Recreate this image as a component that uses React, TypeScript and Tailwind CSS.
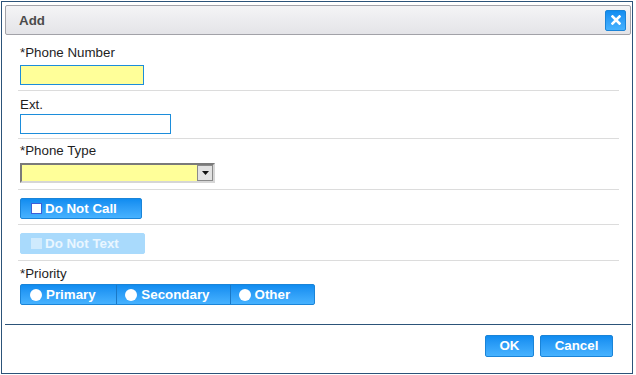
import React from "react";

const blueBtn =
  "bg-linear-to-b from-[#0f8cf0] to-[#46b2ff] border border-[#1a84d8] rounded-[2px] text-white font-bold text-[13.33px]";

function Checkbox({ disabled }: { disabled?: boolean }) {
  return (
    <span
      className={
        disabled
          ? "w-[11px] h-[11px] bg-[#cfeafd] border border-[#cfeafd]"
          : "w-[11px] h-[11px] bg-white border border-[#3d5fd8]"
      }
    />
  );
}

function Radio() {
  return <span className="w-[12px] h-[12px] rounded-full bg-white" />;
}

export default function App() {
  const segments = [
    { label: "Primary", w: "w-[96px]" },
    { label: "Secondary", w: "w-[114px]" },
    { label: "Other", w: "w-[85px]" },
  ];

  return (
    <div
      className="w-[636px] h-[375px] bg-white overflow-hidden text-[#1e1e1e]"
      style={{ fontFamily: '"Liberation Sans", Arial, sans-serif' }}
    >
      <div className="ml-[1px] mt-[1px] w-[632px] h-[373px] border border-[#2c5379] bg-white flex flex-col">
        {/* title bar */}
        <div className="mt-[3px] ml-[3px] w-[626px] h-[30px] shrink-0 border border-[#a2a2a8] rounded-[2px] bg-linear-to-b from-[#f4f4f6] to-[#e4e4e8] flex items-center justify-between pl-[13px] pr-[4px]">
          <span className="text-[13.33px] font-bold text-[#4b4b4b] leading-[15px]">Add</span>
          <button className={"w-[21px] h-[21px] flex items-center justify-center " + blueBtn}>
            <svg width="10" height="10" viewBox="0 0 10 10">
              <path d="M1.5 1.5 L8.5 8.5 M8.5 1.5 L1.5 8.5" stroke="white" strokeWidth="2.6" strokeLinecap="square" />
            </svg>
          </button>
        </div>

        {/* body */}
        <div className="ml-[16px] w-[601px] flex flex-col text-[13.33px]">
          <div className="border-b border-[#dcdcdc] pl-[2px] pt-[10px] pb-[5px] flex flex-col">
            <label className="h-[15px] leading-[15px]">*Phone Number</label>
            <input className="mt-[5px] w-[124px] h-[20px] bg-[#ffff99] border border-[#1c8ddb] outline-none" />
          </div>

          <div className="border-b border-[#dcdcdc] pl-[2px] pt-[6px] pb-[4px] flex flex-col">
            <label className="h-[15px] leading-[15px]">Ext.</label>
            <input className="mt-[2px] w-[151px] h-[20px] bg-white border border-[#1c8ddb] outline-none" />
          </div>

          <div className="border-b border-[#dcdcdc] pl-[2px] pt-[4px] pb-[6px] flex flex-col">
            <label className="h-[15px] leading-[15px]">*Phone Type</label>
            <div className="mt-[5px] w-[195px] h-[20px] border-2 border-t-[#7a7a7a] border-l-[#7a7a7a] border-b-[#d6d6d6] border-r-[#d6d6d6] bg-[#ffff99] flex justify-end">
              <div className="w-[16px] h-full bg-[#e2e2e2] border border-[#8a8a8a] flex items-center justify-center">
                <svg width="7" height="4" viewBox="0 0 7 4">
                  <path d="M0 0 H7 L3.5 4 Z" fill="#111" />
                </svg>
              </div>
            </div>
          </div>

          <div className="border-b border-[#dcdcdc] pl-[2px] pt-[8px] pb-[5px] flex">
            <button className={"w-[122px] h-[21px] flex items-center pl-[10px] gap-[3px] leading-none " + blueBtn}>
              <Checkbox />
              <span>Do Not Call</span>
            </button>
          </div>

          <div className="border-b border-[#dcdcdc] pl-[2px] pt-[8px] pb-[6px] flex">
            <button className="w-[125px] h-[21px] flex items-center pl-[10px] gap-[3px] leading-none bg-[#a9dafc] border border-[#a9dafc] rounded-[2px] text-[#e9f6ff] font-bold text-[13.33px]">
              <Checkbox disabled />
              <span>Do Not Text</span>
            </button>
          </div>

          <div className="pl-[2px] pt-[5px] flex flex-col">
            <label className="h-[15px] leading-[15px]">*Priority</label>
            <div className={"mt-[3px] w-[295px] h-[21px] flex " + blueBtn}>
              {segments.map((s, i) => (
                <div
                  key={s.label}
                  className={
                    s.w +
                    " h-full flex items-center gap-[4px] leading-none " +
                    (i === 0 ? "pl-[9px]" : "pl-[8px] border-l border-[#1a78c6]")
                  }
                >
                  <Radio />
                  <span>{s.label}</span>
                </div>
              ))}
            </div>
          </div>
        </div>

        {/* footer */}
        <div className="mt-[19px] ml-[3px] w-[626px] border-t border-[#2c5379] pt-[10px] pr-[18px] flex justify-end gap-[6px]">
          <button className={"w-[49px] h-[22px] flex items-center justify-center leading-none " + blueBtn}>OK</button>
          <button className={"w-[73px] h-[22px] flex items-center justify-center leading-none " + blueBtn}>Cancel</button>
        </div>
      </div>
    </div>
  );
}
